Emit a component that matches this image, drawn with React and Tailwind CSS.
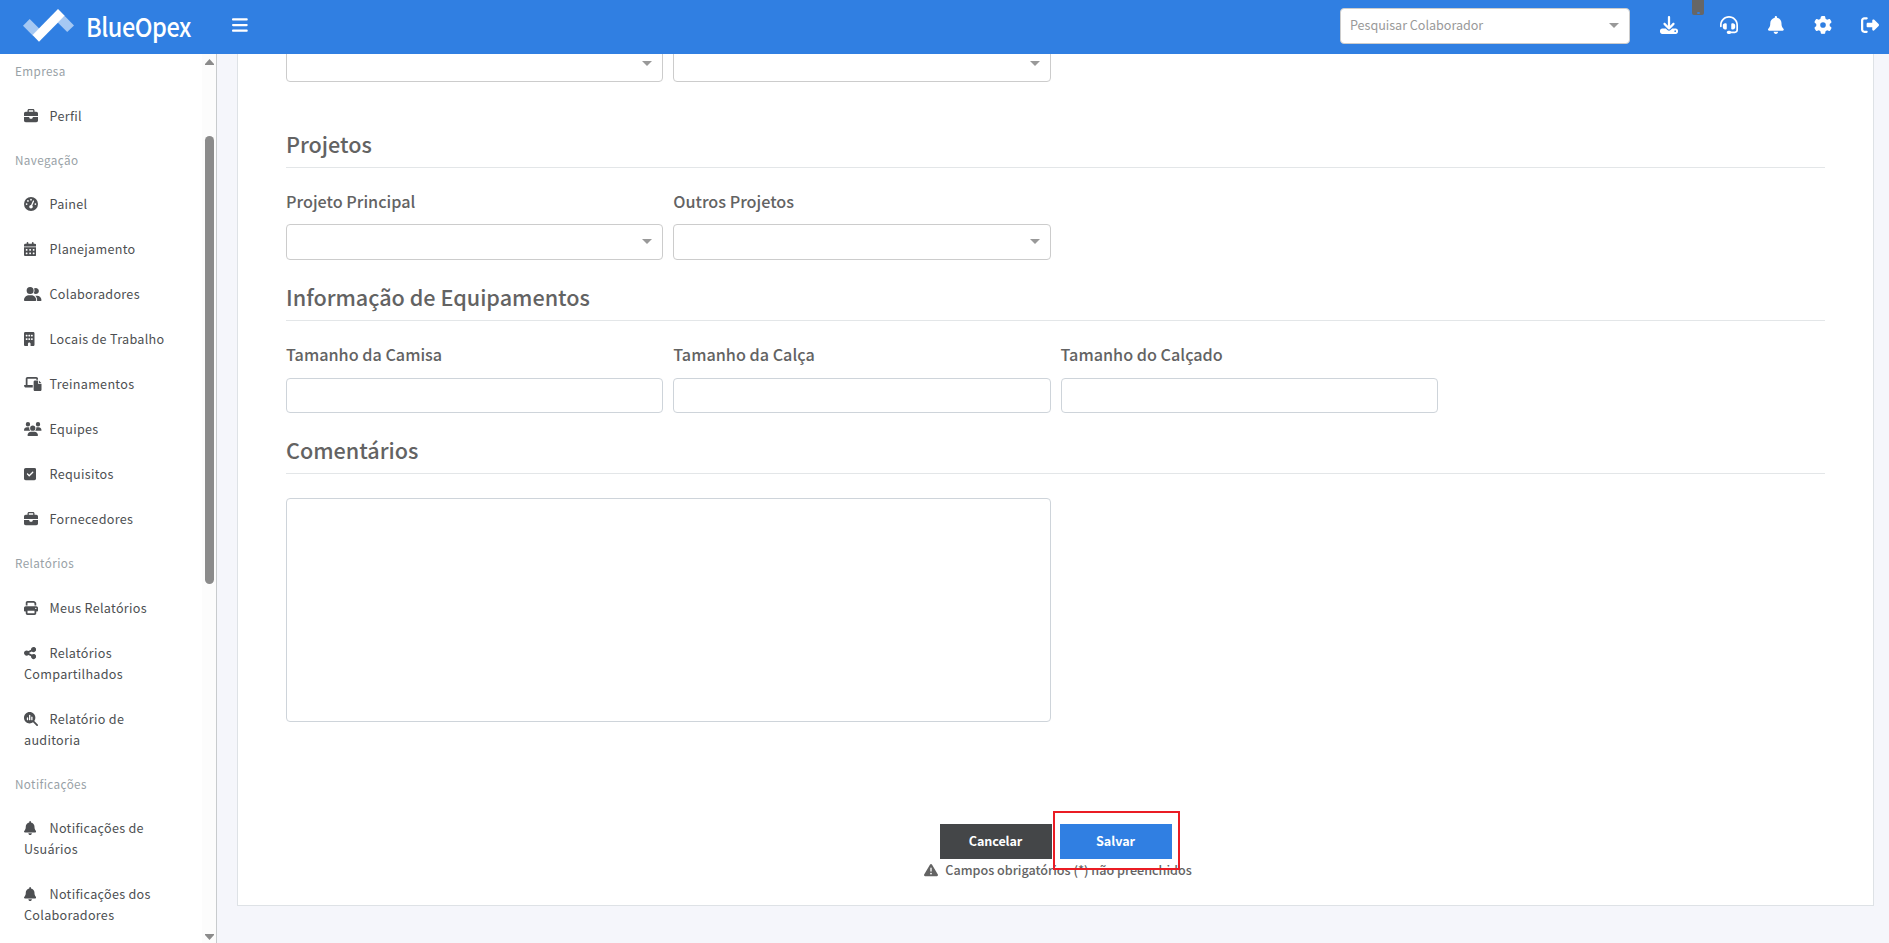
import {
  FaBars,
  FaBell,
  FaBriefcase,
  FaBuilding,
  FaCalendarDays,
  FaDownload,
  FaGaugeHigh,
  FaGear,
  FaHeadset,
  FaLaptopFile,
  FaMagnifyingGlassChart,
  FaPrint,
  FaRightFromBracket,
  FaShareNodes,
  FaSquareCheck,
  FaTriangleExclamation,
  FaUserGroup,
  FaUsers,
} from 'react-icons/fa6'

const menu = [
  { title: 'Empresa', items: [{ icon: FaBriefcase, size: 'w-[14px]', label: 'Perfil' }] },
  {
    title: 'Navegação',
    items: [
      { icon: FaGaugeHigh, size: 'w-[14px]', label: 'Painel' },
      { icon: FaCalendarDays, size: 'w-[12.25px]', label: 'Planejamento' },
      { icon: FaUserGroup, size: 'w-[17.5px]', label: 'Colaboradores' },
      { icon: FaBuilding, size: 'w-[10.5px]', label: 'Locais de Trabalho' },
      { icon: FaLaptopFile, size: 'w-[17.5px]', label: 'Treinamentos' },
      { icon: FaUsers, size: 'w-[17.5px]', label: 'Equipes' },
      { icon: FaSquareCheck, size: 'w-[12.25px]', label: 'Requisitos' },
      { icon: FaBriefcase, size: 'w-[14px]', label: 'Fornecedores' },
    ],
  },
  {
    title: 'Relatórios',
    items: [
      { icon: FaPrint, size: 'w-[14px]', label: 'Meus Relatórios' },
      { icon: FaShareNodes, size: 'w-[12.25px]', label: 'Relatórios Compartilhados' },
      { icon: FaMagnifyingGlassChart, size: 'w-[14px]', label: 'Relatório de auditoria' },
    ],
  },
  {
    title: 'Notificações',
    items: [
      { icon: FaBell, size: 'w-[12.25px]', label: 'Notificações de Usuários' },
      { icon: FaBell, size: 'w-[12.25px]', label: 'Notificações dos Colaboradores' },
    ],
  },
]

function Logo() {
  return (
    <div className="flex items-center">
      <svg className="mb-[3px] ml-[23px] h-[34px] w-[51px]" viewBox="0 0 51 34">
        <path d="M0 16.7 6.7 10 16.2 19.5 9.7 26.5z" fill="#a5c8f3" />
        <path d="M41.5 6.8 51 16.4 44.2 23 34.7 13.5z" fill="#a5c8f3" />
        <path d="M35 0 41.7 6.7 16 32.7 9.5 26z" fill="#fff" />
      </svg>
      <span className="mb-[2px] ml-[12px] w-[108px] origin-left scale-x-[0.905] text-[26px] leading-none font-medium tracking-[-0.5px] text-white">
        BlueOpex
      </span>
    </div>
  )
}

function Caret() {
  return (
    <span className="mb-px border-x-[5px] border-t-[5px] border-x-transparent border-t-[#999]" />
  )
}

function Header() {
  return (
    <header className="relative z-10 flex h-[54px] shrink-0 items-center bg-[#307fe2] pr-[10px] text-white">
      <Logo />
      <button className="ml-[38px] pb-[5px]">
        <FaBars className="h-[18px] w-[15.75px]" />
      </button>
      <div className="mb-[2px] ml-auto flex h-9 w-[290px] items-center justify-between rounded border border-[#ccc] bg-white pr-[10px] pl-[9px] text-[12.6px] tracking-[-0.03px] text-[#999]">
        <span className="mb-px">Pesquisar Colaborador</span>
        <Caret />
      </div>
      <div className="mb-[4px] ml-[30px] flex items-center">
        <FaDownload className="size-[18px]" />
        <FaHeadset className="ml-[42px] size-[18px]" />
        <FaBell className="ml-[30.25px] h-[18px] w-[15.75px]" />
        <FaGear className="ml-[30px] size-[18px]" />
        <FaRightFromBracket className="ml-[29px] size-[18px]" />
      </div>
      {/* Collapsed download badge */}
      <span className="absolute top-0 left-[1692px] flex h-[15px] w-[12px] items-end justify-center rounded-b-[2px] bg-[#666] pb-[1px]">
        <span className="h-[2px] w-[3px] rounded-full bg-[#307fe2]" />
      </span>
    </header>
  )
}

function Sidebar() {
  return (
    <aside className="flex w-[217px] shrink-0 overflow-hidden border-r border-[#c8cbcd] bg-white">
      <nav className="-mt-[5px] h-0 flex-1">
        {menu.map((section) => (
          <div key={section.title}>
            <div className="px-[15px] py-3 text-[11.7px] leading-[19.5px] tracking-[0.4px] text-[#98a1a6]">
              {section.title}
            </div>
            {section.items.map(({ icon: Icon, size, label }) => (
              <a
                key={label}
                className="block px-6 py-3 text-[12.6px] leading-[21px] tracking-[0.3px] text-[#4d4f52]"
              >
                <span className="inline-block w-[25.5px]">
                  <Icon className={`inline-block h-[14px] align-[-2px] ${size}`} />
                </span>
                {label}
              </a>
            ))}
          </div>
        ))}
      </nav>
      <div className="flex w-[14px] flex-col items-center bg-[#fcfcfc] pt-[5px] pb-[3px]">
        <svg className="h-[6px] w-[9px]" viewBox="0 0 9 6">
          <path d="M4.5 0 9 5v1H0V5z" fill="#8b8b8b" />
        </svg>
        <span className="mt-[71px] h-[448px] w-[9px] rounded-full bg-[#8b8b8b]" />
        <svg className="mt-auto h-[6px] w-[9px]" viewBox="0 0 9 6">
          <path d="M4.5 6 9 1V0H0v1z" fill="#8b8b8b" />
        </svg>
      </div>
    </aside>
  )
}

function Title({ children }) {
  return (
    <h2 className="h-[46px] border-b border-[#e3e6e8] text-[21.6px] leading-[43px] font-medium text-[#636363]">
      {children}
    </h2>
  )
}

function Label({ children }) {
  return (
    <label className="block text-[16.2px] leading-[24px] font-medium text-[#636363]">
      {children}
    </label>
  )
}

function Select() {
  return (
    <div className="flex h-9 items-center justify-end rounded border border-[#ccc] bg-white pr-[10px]">
      <Caret />
    </div>
  )
}

function SelectField({ label }) {
  return (
    <div className="space-y-[11px]">
      <Label>{label}</Label>
      <Select />
    </div>
  )
}

function TextField({ label }) {
  return (
    <div className="space-y-3">
      <Label>{label}</Label>
      <input className="block h-[35px] w-full rounded border border-[#ced4da] bg-white" />
    </div>
  )
}

function Form() {
  return (
    <div className="-mt-2 mr-[15px] ml-5 flex h-[860px] flex-1 flex-col border border-[#dee2e6] bg-white px-[48px]">
      <div className="-mt-px grid grid-cols-4 gap-[10px]">
        <Select />
        <Select />
      </div>

      <div className="mt-10">
        <Title>Projetos</Title>
        <div className="mt-[21px] grid grid-cols-4 gap-[10px]">
          <SelectField label="Projeto Principal" />
          <SelectField label="Outros Projetos" />
        </div>
      </div>

      <div className="mt-[15px]">
        <Title>Informação de Equipamentos</Title>
        <div className="mt-[21px] grid grid-cols-4 gap-[10px]">
          <TextField label="Tamanho da Camisa" />
          <TextField label="Tamanho da Calça" />
          <TextField label="Tamanho do Calçado" />
        </div>
      </div>

      <div className="mt-[15px]">
        <Title>Comentários</Title>
        <textarea className="mt-6 block h-[224px] w-[765px] resize-none rounded border border-[#ced4da] bg-white" />
      </div>

      <div className="mt-[102px] flex flex-col items-center text-[12.6px]">
        <div className="flex gap-2 font-bold text-white">
          <button className="h-[35px] w-[112px] bg-[#444648] tracking-[-0.1px]">Cancelar</button>
          <div className="relative">
            <button className="h-[35px] w-[112px] bg-[#307fe2]">Salvar</button>
            {/* Highlight around the save action */}
            <span className="absolute -top-[13px] -left-[7px] h-[59px] w-[127px] border-2 border-[#ea1c24]" />
          </div>
        </div>
        <p className="ml-[5px] flex items-center leading-[21px] font-medium text-[#636363]">
          <FaTriangleExclamation className="mr-[7px] size-[14px]" />
          Campos obrigatórios (*) não preenchidos
        </p>
      </div>
    </div>
  )
}

export default function App() {
  return (
    <div className="flex h-[943px] w-full flex-col overflow-hidden bg-[#f5f6fb] font-['Noto_Sans_CJK_SC','Noto_Sans',sans-serif]">
      <Header />
      <div className="flex min-h-0 flex-1">
        <Sidebar />
        <Form />
      </div>
    </div>
  )
}
